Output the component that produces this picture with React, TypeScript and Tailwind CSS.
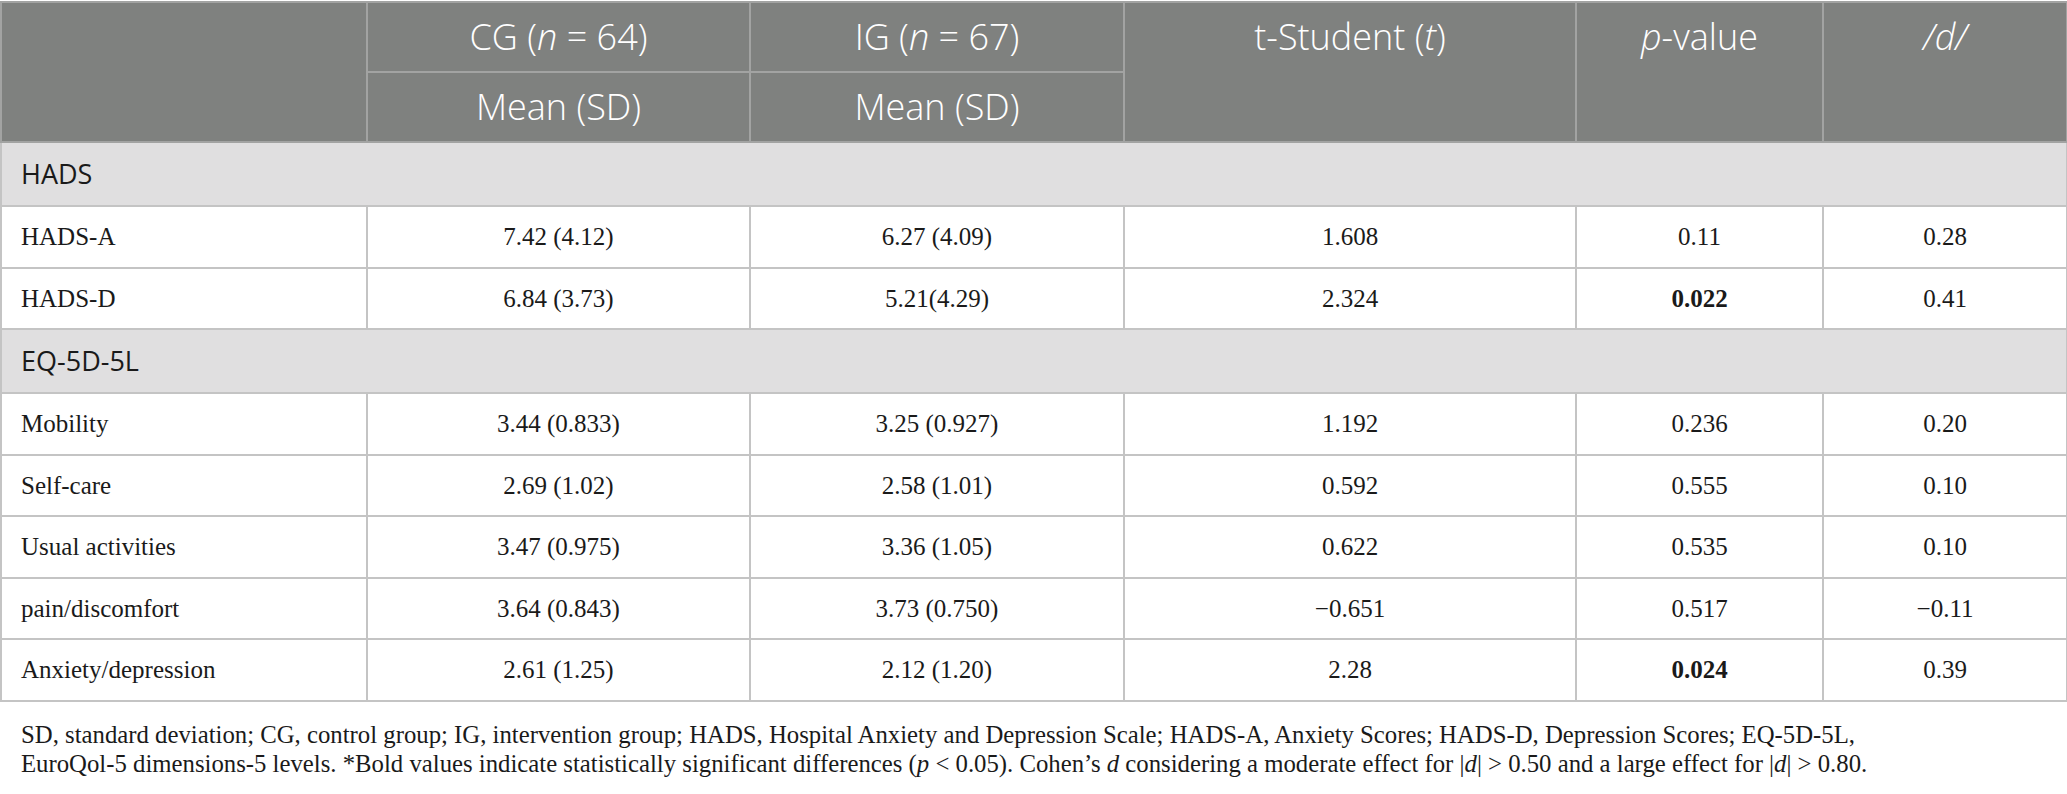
import React from 'react';

const rows = [
    { section: 'HADS' },
    { label: 'HADS-A', cg: '7.42 (4.12)', ig: '6.27 (4.09)', t: '1.608', p: '0.11', d: '0.28' },
    { label: 'HADS-D', cg: '6.84 (3.73)', ig: '5.21(4.29)', t: '2.324', p: '0.022', d: '0.41', bold: true },
    { section: 'EQ-5D-5L' },
    { label: 'Mobility', cg: '3.44 (0.833)', ig: '3.25 (0.927)', t: '1.192', p: '0.236', d: '0.20' },
    { label: 'Self-care', cg: '2.69 (1.02)', ig: '2.58 (1.01)', t: '0.592', p: '0.555', d: '0.10' },
    { label: 'Usual activities', cg: '3.47 (0.975)', ig: '3.36 (1.05)', t: '0.622', p: '0.535', d: '0.10' },
    { label: 'pain/discomfort', cg: '3.64 (0.843)', ig: '3.73 (0.750)', t: '\u22120.651', p: '0.517', d: '\u22120.11' },
    { label: 'Anxiety/depression', cg: '2.61 (1.25)', ig: '2.12 (1.20)', t: '2.28', p: '0.024', d: '0.39', bold: true },
];

const sans = "font-['Open_Sans',sans-serif]";
const serif = "font-['Liberation_Serif',serif]";

export default function App() {
    const th = `border-2 border-[#a2a3a2] ${sans} font-light text-[36px] leading-[48px] text-white text-center align-top pt-[10px] px-2`;
    const td = `border-2 border-[#c4c4c4] ${serif} text-[25px] text-[#1a1a1a] text-center align-middle`;

    return (
        <div className="w-[2067px] h-[794px] bg-white pt-[1px]">
            <table className="w-[2066px] border-collapse table-fixed border-2 border-[#c4c4c4]">
                <colgroup>
                    <col className="w-[366px]" />
                    <col className="w-[383px]" />
                    <col className="w-[374px]" />
                    <col className="w-[452px]" />
                    <col className="w-[247px]" />
                    <col className="w-[244px]" />
                </colgroup>
                <thead className="bg-[#7f817f]">
                    <tr className="h-[70px]">
                        <th rowSpan={2} className={th}></th>
                        <th className={th}>CG (<i>n</i> = 64)</th>
                        <th className={th}>IG (<i>n</i> = 67)</th>
                        <th rowSpan={2} className={th}>t-Student (<i>t</i>)</th>
                        <th rowSpan={2} className={th}><i>p</i>-value</th>
                        <th rowSpan={2} className={th}><i>/d/</i></th>
                    </tr>
                    <tr className="h-[70px]">
                        <th className={th}>Mean (SD)</th>
                        <th className={th}>Mean (SD)</th>
                    </tr>
                </thead>
                <tbody>
                    {rows.map((r, i) =>
                        r.section ? (
                            <tr key={i} className="h-[64px] bg-[#e0dfe0]">
                                <td colSpan={6} className={`border-2 border-[#c4c4c4] ${sans} text-[27px] text-[#1a1a1a] pl-[19px] align-middle`}>
                                    {r.section}
                                </td>
                            </tr>
                        ) : (
                            <tr key={i} className="h-[61.5px]">
                                <td className={`${td} !text-left pl-[19px]`}>{r.label}</td>
                                <td className={td}>{r.cg}</td>
                                <td className={td}>{r.ig}</td>
                                <td className={td}>{r.t}</td>
                                <td className={`${td} ${r.bold ? 'font-bold' : ''}`}>{r.p}</td>
                                <td className={td}>{r.d}</td>
                            </tr>
                        )
                    )}
                </tbody>
            </table>
            <p className={`${serif} text-[24.75px] leading-[29px] text-[#1a1a1a] pl-[21px] pt-[18px]`}>
                SD, standard deviation; CG, control group; IG, intervention group; HADS, Hospital Anxiety and Depression Scale; HADS-A, Anxiety Scores; HADS-D, Depression Scores; EQ-5D-5L,
                <br />
                EuroQol-5 dimensions-5 levels. *Bold values indicate statistically significant differences (<i>p</i> &lt; 0.05). Cohen’s <i>d</i> considering a moderate effect for |<i>d</i>| &gt; 0.50 and a large effect for |<i>d</i>| &gt; 0.80.
            </p>
        </div>
    );
}
